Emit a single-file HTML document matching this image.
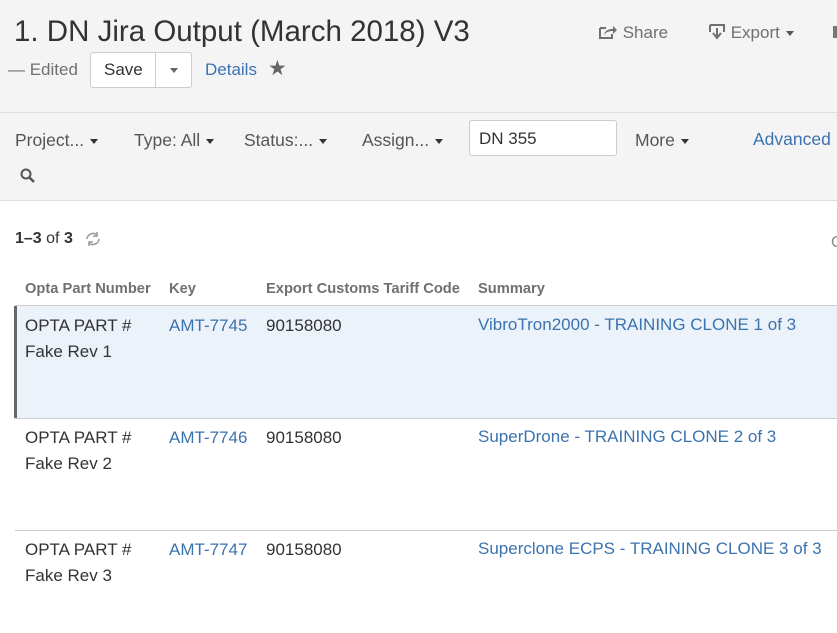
<!DOCTYPE html>
<html><head><style>
body{margin:0;width:837px;height:633px;overflow:hidden;background:#fff;font-family:"Liberation Sans",sans-serif;color:#333;position:relative}
.a{position:absolute;white-space:nowrap}
.link{color:#3b73af}
.caret{display:inline-block;width:0;height:0;border-left:4px solid transparent;border-right:4px solid transparent;border-top:5px solid #333;vertical-align:middle;margin-left:6px}
.c{font-size:17px;line-height:26px}
</style></head><body>
<div class="a" style="left:0;top:0;width:837px;height:112px;background:#f4f4f4;border-bottom:1px solid #ddd"></div>
<div class="a" style="left:0;top:113px;width:837px;height:87px;background:#f4f4f4;border-bottom:1px solid #ddd"></div>
<div class="a" style="left:14px;top:15px;font-size:29.5px;color:#333">1. DN Jira Output (March 2018) V3</div>
<div class="a" style="left:598px;top:23px;font-size:17px;color:#707070"><svg width="20" height="16" viewBox="0 0 20 16" style="vertical-align:-2px"><path d="M2 4h6M2 4v10h12v-4" stroke="#707070" stroke-width="2" fill="none"/><path d="M6 11c1-5 5-6 9-6V2l4 4-4 4V7c-4 0-7 1-9 4z" fill="#707070"/></svg> Share</div>
<div class="a" style="left:708px;top:23px;font-size:17px;color:#707070"><svg width="18" height="18" viewBox="0 0 18 18" style="vertical-align:-3px"><path d="M2 2h14v7" stroke="#707070" stroke-width="2" fill="none"/><path d="M2 2v7" stroke="#707070" stroke-width="2"/><path d="M9 5v8M5 10l4 5 4-5" stroke="#707070" stroke-width="2" fill="none"/></svg> Export<span class="caret" style="border-top-color:#555"></span></div>
<div class="a" style="left:833px;top:26px;width:4px;height:12px;background:#777"></div>
<div class="a" style="left:8px;top:60px;font-size:17px;color:#707070">— Edited</div>
<div class="a" style="left:90px;top:52px;width:100px;height:34px;background:#fff;border:1px solid #ccc;border-radius:3px"></div>
<div class="a" style="left:155px;top:52px;width:1px;height:36px;background:#ccc"></div>
<div class="a" style="left:104px;top:60px;font-size:17px;color:#333">Save</div>
<div class="a" style="left:164px;top:62px"><span class="caret" style="border-top-color:#666"></span></div>
<div class="a link" style="left:205px;top:60px;font-size:17px">Details</div>
<div class="a" style="left:268px;top:56px;font-size:21px;color:#666">★</div>
<div class="a" style="left:15px;top:130px;font-size:17.5px;color:#555">Project...<span class="caret"></span></div>
<div class="a" style="left:134px;top:130px;font-size:17.5px;color:#555">Type: All<span class="caret"></span></div>
<div class="a" style="left:244px;top:130px;font-size:17.5px;color:#555">Status:...<span class="caret"></span></div>
<div class="a" style="left:362px;top:130px;font-size:17.5px;color:#555">Assign...<span class="caret"></span></div>
<div class="a" style="left:469px;top:120px;width:146px;height:34px;background:#fff;border:1px solid #ccc;border-radius:3px"></div>
<div class="a" style="left:479px;top:129px;font-size:17px;color:#333">DN 355</div>
<div class="a" style="left:635px;top:130px;font-size:17.5px;color:#555">More<span class="caret"></span></div>
<div class="a link" style="left:753px;top:129px;font-size:17.5px">Advanced</div>
<svg class="a" style="left:19px;top:167px" width="18" height="18" viewBox="0 0 18 18"><circle cx="7" cy="7" r="4.5" stroke="#555" stroke-width="2" fill="none"/><path d="M10 10l5 5" stroke="#555" stroke-width="2.5"/></svg>
<div class="a" style="left:15px;top:230px;font-size:16px;color:#333"><b>1–3</b> of <b>3</b></div>
<svg class="a" style="left:84px;top:230px" width="18" height="18" viewBox="0 0 18 18"><path d="M3 9a6 6 0 0 1 10-4M15 9a6 6 0 0 1-10 4" stroke="#999" stroke-width="1.5" fill="none"/><path d="M13 2v4h-4M5 16v-4h4" stroke="#999" stroke-width="1.5" fill="none"/></svg>
<div class="a" style="left:831px;top:234px;font-size:16px;color:#888">C</div>
<div class="a" style="left:25px;top:281px;font-size:14.7px;font-weight:bold;color:#707070">Opta Part Number</div>
<div class="a" style="left:169px;top:281px;font-size:14.7px;font-weight:bold;color:#707070">Key</div>
<div class="a" style="left:266px;top:281px;font-size:14.7px;font-weight:bold;color:#707070">Export Customs Tariff Code</div>
<div class="a" style="left:478px;top:281px;font-size:14.7px;font-weight:bold;color:#707070">Summary</div>
<div class="a" style="left:15px;top:305px;width:822px;height:1px;background:#ccc"></div>
<div class="a" style="left:15px;top:306px;width:822px;height:112px;background:#ebf2f9"></div>
<div class="a" style="left:14px;top:306px;width:3px;height:112px;background:#666"></div>
<div class="a" style="left:15px;top:418px;width:822px;height:1px;background:#ccc"></div>
<div class="a" style="left:15px;top:530px;width:822px;height:1px;background:#ccc"></div>
<div class="a c" style="left:25px;top:313px">OPTA PART #<br>Fake Rev 1</div>
<div class="a link c" style="left:169px;top:313px">AMT-7745</div>
<div class="a c" style="left:266px;top:313px">90158080</div>
<div class="a link c" style="left:478px;top:312px">VibroTron2000 - TRAINING CLONE 1 of 3</div>
<div class="a c" style="left:25px;top:425px">OPTA PART #<br>Fake Rev 2</div>
<div class="a link c" style="left:169px;top:425px">AMT-7746</div>
<div class="a c" style="left:266px;top:425px">90158080</div>
<div class="a link c" style="left:478px;top:424px">SuperDrone - TRAINING CLONE 2 of 3</div>
<div class="a c" style="left:25px;top:537px">OPTA PART #<br>Fake Rev 3</div>
<div class="a link c" style="left:169px;top:537px">AMT-7747</div>
<div class="a c" style="left:266px;top:537px">90158080</div>
<div class="a link c" style="left:478px;top:536px">Superclone ECPS - TRAINING CLONE 3 of 3</div>
</body></html>
